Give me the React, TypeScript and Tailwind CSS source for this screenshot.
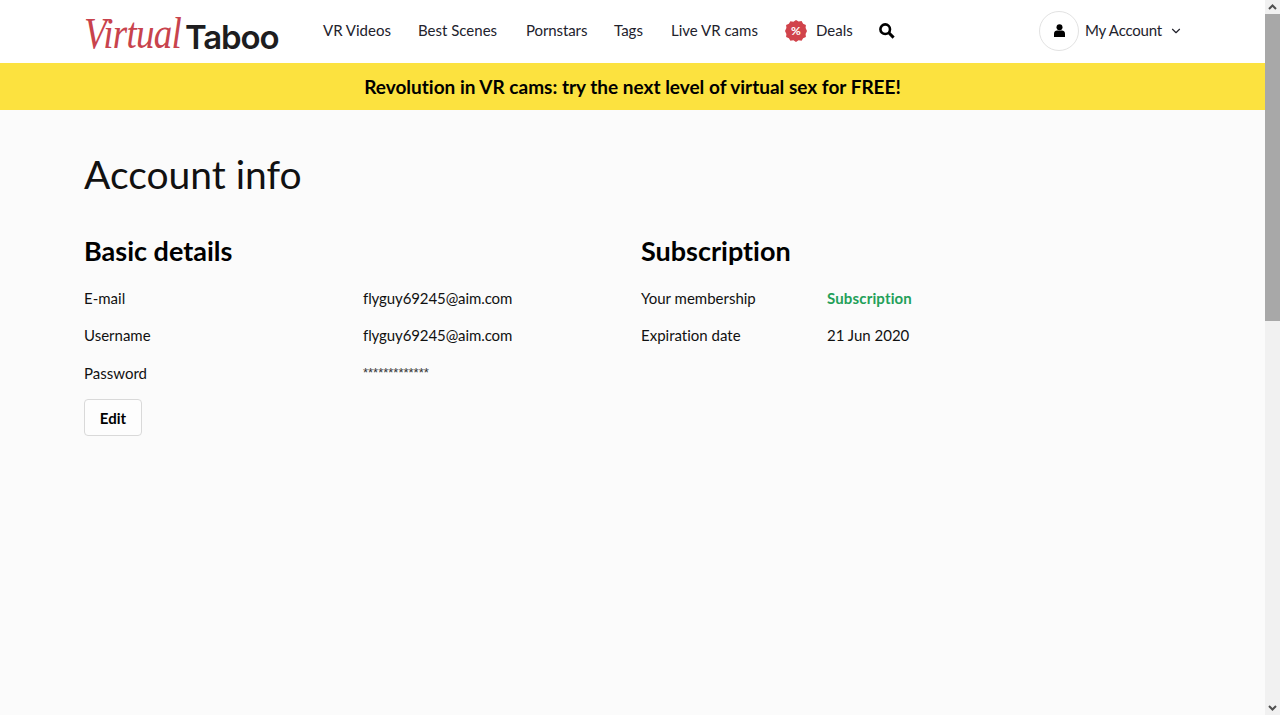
import { ChevronDown } from 'lucide-react';

const font = "font-['Lato','Open_Sans',sans-serif]";

function Row({ label, labelWidth, children }: { label: string; labelWidth: string; children: React.ReactNode }) {
  return (
    <div className="flex h-[37.5px] items-center text-[15px] text-[#111]">
      <div className={labelWidth}>{label}</div>
      <div>{children}</div>
    </div>
  );
}

function Scrollbar() {
  return (
    <div className="flex h-full w-[15px] shrink-0 flex-col bg-[#f1f1f1]">
      <div className="flex h-[14px] items-center justify-center bg-[#f1f1f1]">
        <svg width="9" height="6" viewBox="0 0 9 6"><path d="M1 5l3.5-3.5L8 5" fill="none" stroke="#505050" strokeWidth="2" /></svg>
      </div>
      <div className="h-[307px] bg-[#a8a8a8]" />
      <div className="flex-1" />
      <div className="flex h-[14px] items-center justify-center">
        <svg width="9" height="6" viewBox="0 0 9 6"><path d="M1 1l3.5 3.5L8 1" fill="none" stroke="#505050" strokeWidth="2" /></svg>
      </div>
    </div>
  );
}

function Logo() {
  return (
    <div className="flex w-[239px] items-baseline pt-[12px]">
      <span className="inline-block w-[101px] origin-bottom-left scale-y-[1.2] font-['Liberation_Serif',serif] text-[37px] italic leading-none tracking-[-0.7px] text-[#c8434d]">Virtual</span>
      <span className="font-['Inter',sans-serif] text-[33px] font-semibold leading-none tracking-[-1.1px] text-[#1d1d1f]">Taboo</span>
    </div>
  );
}

function DealBadge() {
  return (
    <svg width="22" height="22" viewBox="0 0 22 22">
      <path
        d="M11 0l2.6 1.6 3-.5 1.5 2.6 2.8 1.3-.3 3L22 11l-1.4 2.9.3 3-2.8 1.3-1.5 2.6-3-.5L11 22l-2.6-1.7-3 .5-1.5-2.6-2.8-1.3.3-3L0 11l1.4-2.9-.3-3 2.8-1.3 1.5-2.6 3 .5z"
        fill="#d1434b"
      />
      <text x="11" y="15" textAnchor="middle" fontSize="12" fontWeight="700" fill="#fff" fontFamily="Lato, sans-serif">%</text>
    </svg>
  );
}

export default function App() {
  return (
    <div className={`flex h-[715px] w-[1280px] overflow-hidden bg-[#fbfbfb] [font-variant-ligatures:none] ${font}`}>
      <div className="min-w-0 flex-1">
        <header className="flex h-[63px] items-center bg-white pb-[2px] pl-[84px]">
          <Logo />
          <nav className="flex items-center text-[15px] text-[#22222c]">
            <a className="w-[95px]">VR Videos</a>
            <a className="w-[108px]">Best Scenes</a>
            <a className="w-[88px] tracking-[-0.1px]">Pornstars</a>
            <a className="w-[57px]">Tags</a>
            <a className="w-[114px]">Live VR cams</a>
            <span className="flex w-[94px] items-center gap-[9px]">
              <DealBadge />
              Deals
            </span>
            <svg width="16" height="16" viewBox="0 0 16 16">
              <circle cx="6.2" cy="6.2" r="4.8" fill="none" stroke="#000" strokeWidth="2.6" />
              <path d="M9.8 9.8L14.6 14.6" stroke="#000" strokeWidth="3" />
            </svg>
          </nav>
          <div className="ml-auto flex items-center pr-[82px] text-[15px] text-[#22222c]">
            <span className="mr-[6px] flex h-10 w-10 items-center justify-center rounded-full border border-[#e2e2e2]">
              <svg width="11" height="13" viewBox="0 0 11 13">
                <circle cx="5.5" cy="3.2" r="3" fill="#000" />
                <path d="M0 13V9.5C0 7.5 1.5 6.5 3 6.5h5c1.5 0 3 1 3 3V13z" fill="#000" />
              </svg>
            </span>
            <span className="tracking-[-0.2px]">My Account</span>
            <ChevronDown className="ml-[7px]" size={14} strokeWidth={2} />
          </div>
        </header>

        <div className="flex h-[47px] items-center justify-center bg-[#fce23f] pt-[1px] text-[19px] font-bold text-black">
          Revolution in VR cams: try the next level of virtual sex for FREE!
        </div>

        <main className="px-[84px] pt-[40px]">
          <h1 className="text-[39px] font-normal leading-[48px] text-[#111]">Account info</h1>
          <div className="mt-[36px] flex">
            <section className="w-[557px]">
              <h2 className="text-[27px] font-bold leading-[34px] text-black">Basic details</h2>
              <div className="mt-[11px]">
                <Row label="E-mail" labelWidth="w-[279px]"><span className="tracking-[-0.1px]">flyguy69245@aim.com</span></Row>
                <Row label="Username" labelWidth="w-[279px]"><span className="tracking-[-0.1px]">flyguy69245@aim.com</span></Row>
                <Row label="Password" labelWidth="w-[279px]">
                  <span className="relative -top-[2px] font-['Liberation_Sans',sans-serif] text-[13px] text-[#333]">*************</span>
                </Row>
              </div>
              <button className="mt-[7.5px] h-[37px] w-[58px] rounded-[4px] border border-[#d9d9d9] bg-[#fdfdfd] pt-px text-[15px] font-bold text-black">
                Edit
              </button>
            </section>
            <section>
              <h2 className="text-[27px] font-bold leading-[34px] text-black">Subscription</h2>
              <div className="mt-[11px]">
                <Row label="Your membership" labelWidth="w-[186px]">
                  <span className="font-bold tracking-[0.15px] text-[#23a059]">Subscription</span>
                </Row>
                <Row label="Expiration date" labelWidth="w-[186px]">21 Jun 2020</Row>
              </div>
            </section>
          </div>
        </main>
      </div>
      <Scrollbar />
    </div>
  );
}
